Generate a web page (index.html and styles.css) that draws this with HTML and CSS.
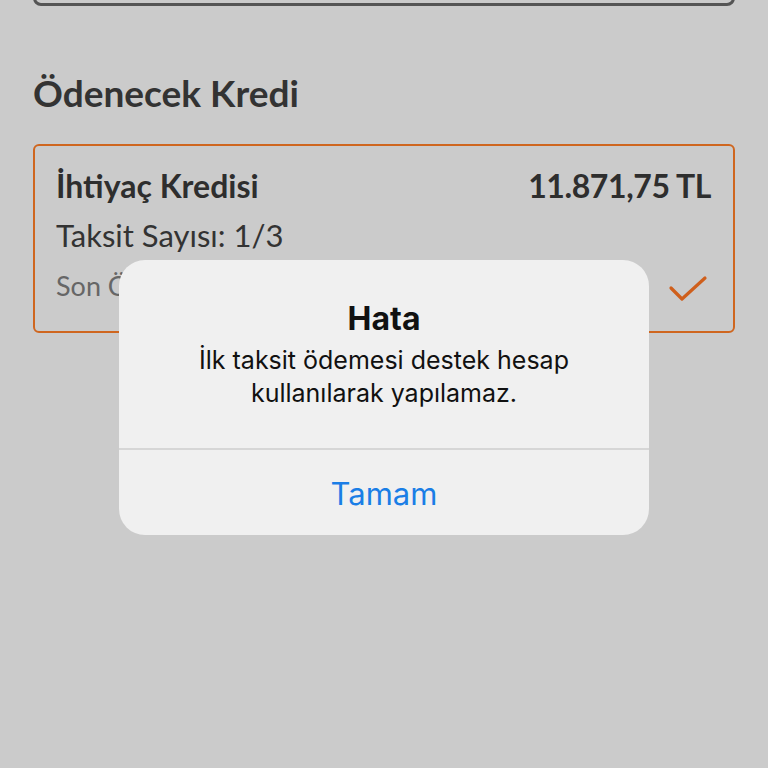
FILE: index.html
```html
<!DOCTYPE html>
<html lang="tr">
<head>
<meta charset="utf-8">
<link rel="stylesheet" href="styles.css">
</head>
<body>
<div class="page">
  <div class="top-box"></div>
  <h1 class="section-title">Ödenecek Kredi</h1>
  <div class="card">
    <div class="row">
      <span class="loan-name">İhtiyaç Kredisi</span>
      <span class="amount">11.871,75 TL</span>
    </div>
    <div class="installments">Taksit Sayısı: 1/3</div>
    <div class="row due-row">
      <span class="due">Son Ödeme Tarihi</span>
      <svg class="check" width="40" height="28" viewBox="0 0 40 28"><path d="M3 13 L14 24 L37 3" fill="none" stroke="#cf5f1c" stroke-width="3.2" stroke-linecap="round" stroke-linejoin="round"/></svg>
    </div>
  </div>
</div>
<div class="alert">
  <div class="alert-body">
    <div class="alert-title">Hata</div>
    <div class="alert-msg">İlk taksit ödemesi destek hesap<br>kullanılarak yapılamaz.</div>
  </div>
  <div class="alert-btn">Tamam</div>
</div>
</body>
</html>
```
FILE: styles.css
```css
html, body {
  margin: 0;
  padding: 0;
  background: #cbcbcb;
  width: 768px;
  height: 768px;
  overflow: hidden;
}
.page {
  padding: 0 33px;
  font-family: Lato, "Noto Sans", sans-serif;
  color: #303030;
}
.top-box {
  height: 40px;
  margin-top: -34px;
  border: 3px solid #555;
  border-radius: 8px;
  box-sizing: border-box;
}
.section-title {
  margin: 65px 0 0 0;
  font-size: 37px;
  line-height: 44px;
  font-weight: 700;
  color: #333;
  letter-spacing: 0;
}
.card {
  margin-top: 29px;
  height: 189px;
  box-sizing: border-box;
  border: 2px solid #cf661f;
  border-radius: 6px;
  padding: 22px 22px 0 21px;
}
.row {
  display: flex;
  justify-content: space-between;
  align-items: center;
}
.loan-name, .amount {
  font-size: 32px;
  font-weight: 700;
  line-height: 36px;
  color: #2e2e2e;
}
.amount {
  letter-spacing: -0.4px;
}
.installments {
  font-size: 31px;
  line-height: 36px;
  margin-top: 13px;
  color: #333;
}
.due-row {
  margin-top: 16px;
}
.due {
  font-size: 27px;
  color: #666;
  line-height: 34px;
}
.check {
  margin-right: 3px;
  margin-top: 6px;
}
.alert {
  position: absolute;
  left: 119px;
  top: 260px;
  width: 530px;
  height: 275px;
  background: #f0f0f0;
  border-radius: 26px;
  font-family: Inter, Roboto, "Noto Sans", sans-serif;
  display: flex;
  flex-direction: column;
  text-align: center;
  overflow: hidden;
}
.alert-body {
  height: 190px;
  border-bottom: 2px solid #d6d6d6;
  box-sizing: border-box;
  padding-top: 41px;
}
.alert-title {
  font-size: 32px;
  font-weight: 700;
  color: #111;
  line-height: 36px;
}
.alert-msg {
  margin-top: 7px;
  font-size: 25px;
  line-height: 33px;
  color: #111;
}
.alert-btn {
  flex: 1;
  display: flex;
  align-items: center;
  justify-content: center;
  padding-top: 1px;
  font-size: 31px;
  color: #1a7ee6;
}
```
